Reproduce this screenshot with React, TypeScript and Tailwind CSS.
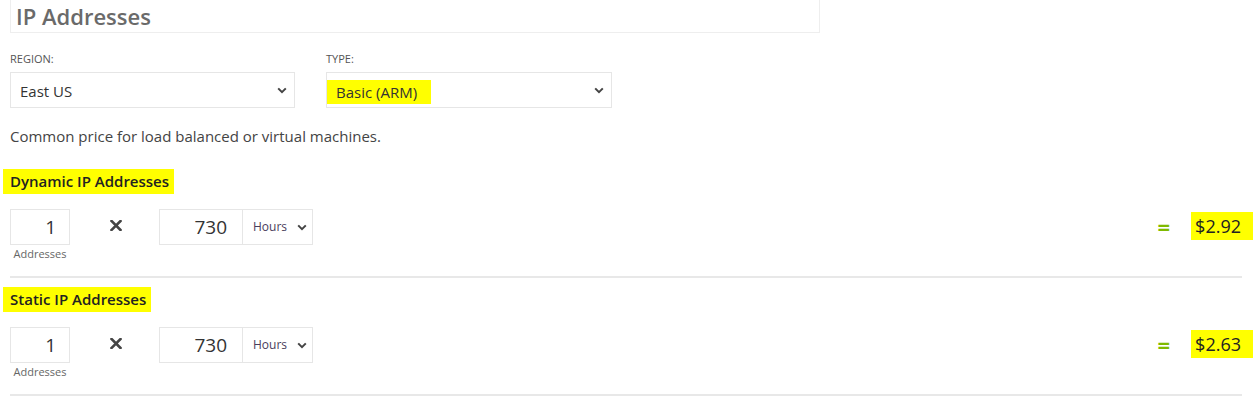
import React from "react";

function Chevron() {
  return (
    <svg width="10" height="7" viewBox="0 0 10 7" className="shrink-0">
      <path d="M1.2 1.4 L5 5.2 L8.8 1.4" fill="none" stroke="#444" strokeWidth="2" />
    </svg>
  );
}

function Times() {
  return (
    <svg width="12" height="11" viewBox="0 0 12 11">
      <path d="M1.5 1 L10.5 10 M10.5 1 L1.5 10" stroke="#444" strokeWidth="2.6" strokeLinecap="square" />
    </svg>
  );
}

function Row({ title, price, first }: { title: string; price: string; first?: boolean }) {
  return (
    <div className="border-b-2 border-[#e8e8e8]">
      <div className={`${first ? "h-[48px]" : "h-[34px]"} flex items-end`}>
        <span className="-ml-[7px] bg-[#ffff00] pl-[7px] pr-[5px] h-[25px] flex items-center text-[15px] font-semibold text-[#222]">
          {title}
        </span>
      </div>
      <div className="flex items-start mt-[15px]">
        <div className="flex flex-col items-center w-[60px]">
          <div className="w-[60px] h-[36px] border border-[#e6e6e6] flex items-center justify-end pr-[13px] text-[19px] text-[#333]">
            1
          </div>
          <div className="text-[11px] text-[#666] leading-[14px] mt-[2px]">Addresses</div>
        </div>
        <div className="w-[89px] h-[33px] flex items-center justify-center pl-[2px]">
          <Times />
        </div>
        <div className="w-[84px] h-[36px] border border-[#e6e6e6] flex items-center justify-end pr-[15px] text-[19px] text-[#333]">
          730
        </div>
        <div className="w-[70px] h-[36px] border border-[#e6e6e6] border-l-0 flex items-center justify-between pl-[10px] pr-[5px] text-[12px] text-[#4a3d5c]">
          Hours
          <Chevron />
        </div>
        <div className="ml-auto flex items-center h-[34px] -mr-[11px]">
          <span className="text-[22px] font-bold text-[#7fba00] leading-none mr-[21px]">=</span>
          <span className="bg-[#ffff00] h-[28px] pl-[4px] pr-[12px] flex items-center text-[18px] text-[#222]">
            {price}
          </span>
        </div>
      </div>
      <div className="h-[15px]" />
    </div>
  );
}

export default function App() {
  return (
    <div className="w-[1256px] h-[402px] overflow-hidden bg-white font-['Segoe_UI','Open_Sans',sans-serif] text-[#333]">
      <div className="pl-[10px] pr-[14px]">
        <div className="w-[810px] h-[33px] border-x border-b border-[#eeeeee] flex items-end pl-[5px]">
          <span className="text-[22px] leading-[32px] font-semibold text-[#6a6a6a]">IP Addresses</span>
        </div>
        <div className="flex gap-[31px] mt-[18px]">
          <div className="w-[285px]">
            <div className="text-[11px] leading-[16px] text-[#555] uppercase">Region:</div>
            <div className="mt-[5px] h-[36px] border border-[#e6e6e6] flex items-center justify-between pl-[9px] pr-[7px] text-[15px] text-[#333]">
              <span className="mt-[2px]">East US</span>
              <Chevron />
            </div>
          </div>
          <div className="w-[286px]">
            <div className="text-[11px] leading-[16px] text-[#555] uppercase">Type:</div>
            <div className="mt-[5px] h-[36px] border border-[#e6e6e6] flex items-center justify-between pr-[7px] text-[15px] text-[#333]">
              <span className="bg-[#ffff00] h-[24px] mt-[7px] flex items-center pl-[9px] pr-[14px] self-start">
                Basic (ARM)
              </span>
              <Chevron />
            </div>
          </div>
        </div>
        <div className="mt-[18px] text-[15px] leading-[20px] text-[#444]">
          Common price for load balanced or virtual machines.
        </div>
        <Row title="Dynamic IP Addresses" price="$2.92" first />
        <Row title="Static IP Addresses" price="$2.63" />
      </div>
    </div>
  );
}
